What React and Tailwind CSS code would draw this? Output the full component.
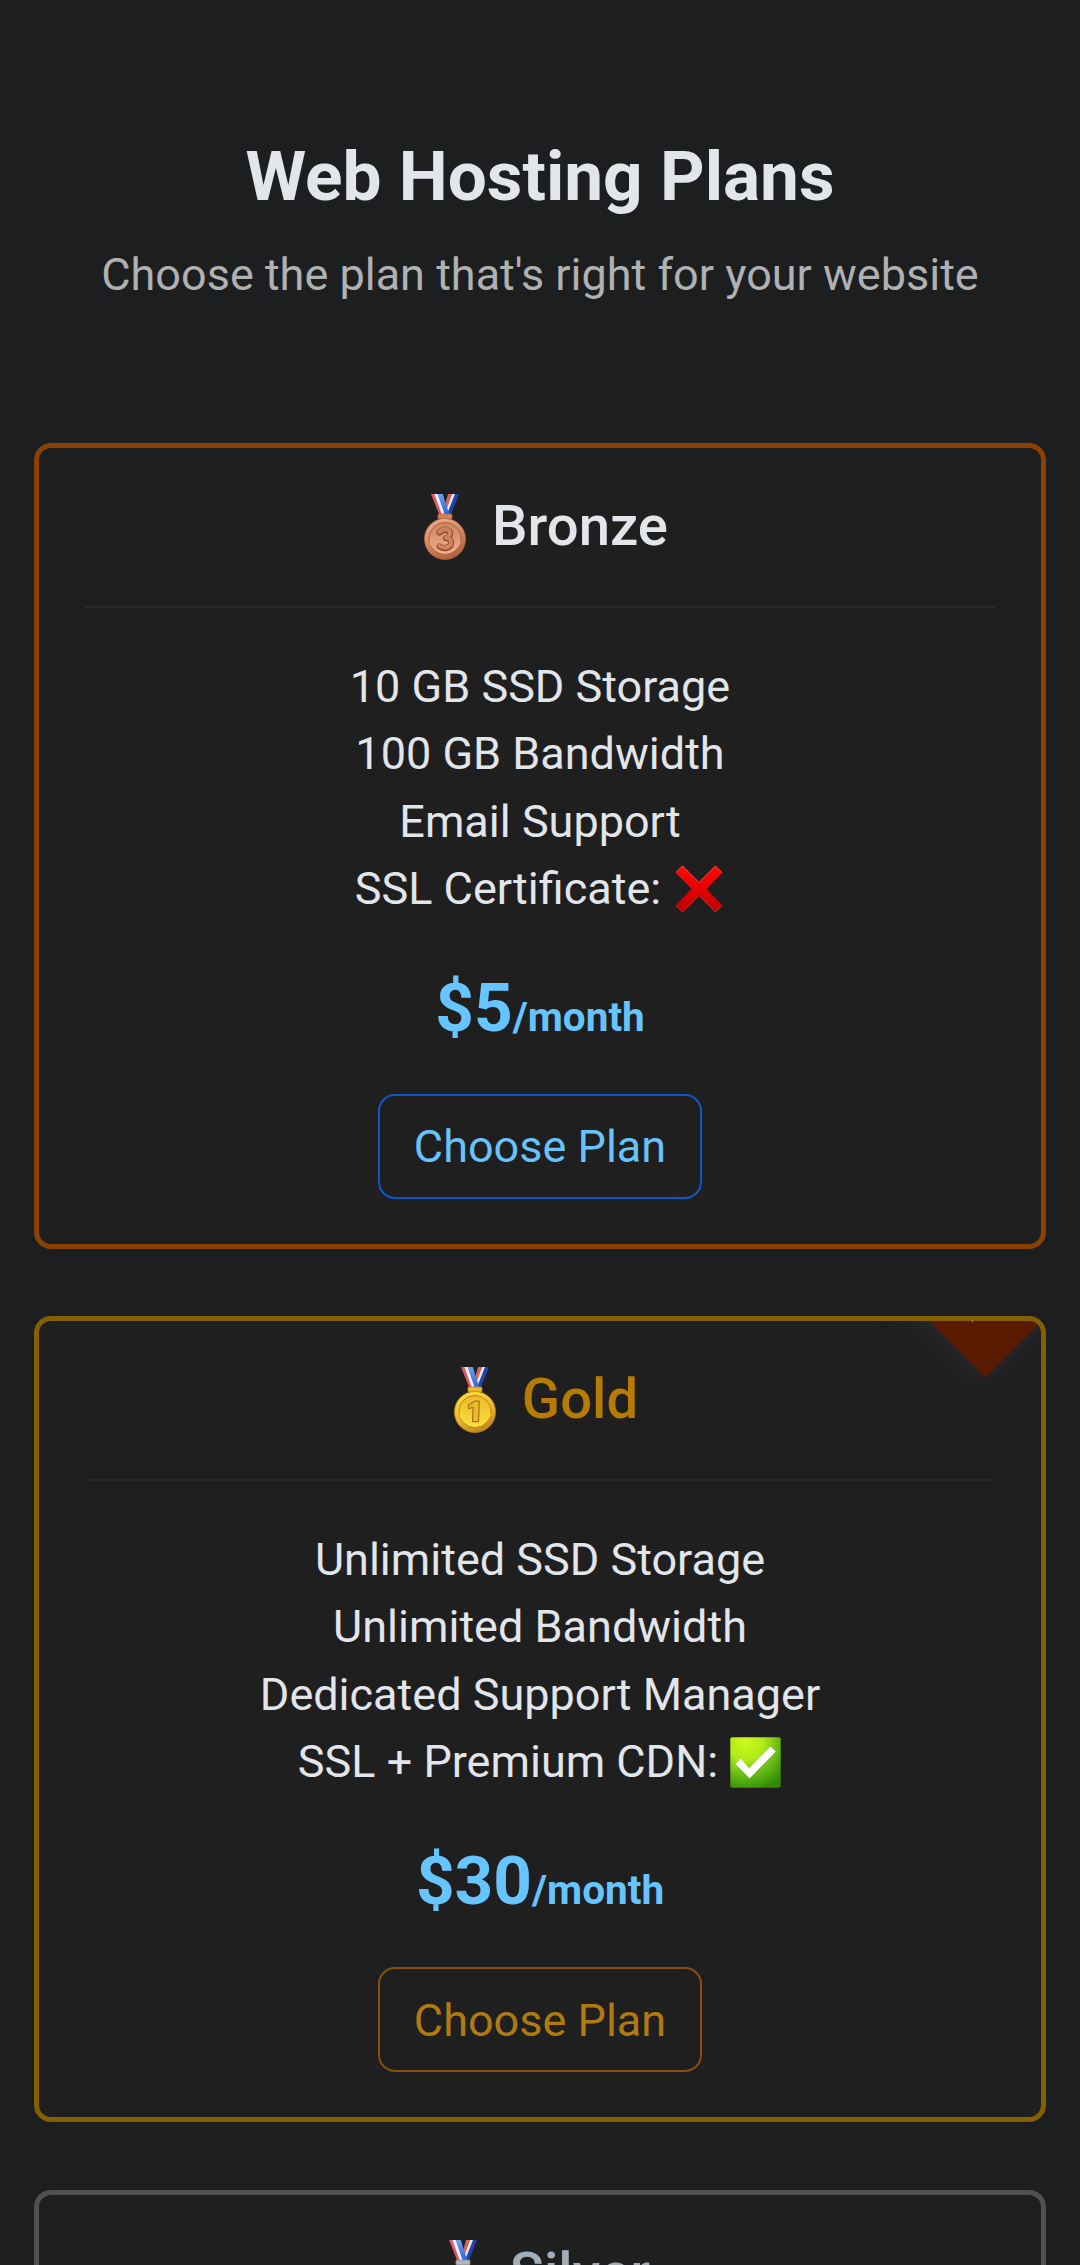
function Medal({ number, light, mid, dark, rim, id }) {
  return (
    <svg className="h-[66px] w-[42px] shrink-0" viewBox="0 0 42 66" aria-hidden="true">
      <defs>
        <linearGradient id={id} x1="0.2" y1="0" x2="0.6" y2="1">
          <stop offset="0" stopColor={light} />
          <stop offset="0.55" stopColor={mid} />
          <stop offset="1" stopColor={rim} />
        </linearGradient>
        <linearGradient id={id + "d"} x1="0" y1="0" x2="0" y2="1">
          <stop offset="0" stopColor={mid} />
          <stop offset="1" stopColor={light} />
        </linearGradient>
        <linearGradient id={id + "b"} x1="0" y1="0" x2="0" y2="1">
          <stop offset="0" stopColor="#6ca0ee" />
          <stop offset="1" stopColor="#2a62d8" />
        </linearGradient>
      </defs>
      <path d="M24 0h5.200l-7 21h-4z" fill="#d0655b" />
      <path d="M28.200 0h3.200l-7.400 21h-3.500z" fill="#e9eaf4" />
      <path d="M31 0H35l-8.500 21.500h-4z" fill="#2343ac" />
      <path d="M7 0h4.400l8.400 21.500h-4.200z" fill="#e4566a" />
      <path d="M10.400 0h3.600l7.600 21.500h-3.400z" fill="#f6f4f8" />
      <path d="M13.600 0h5.200l6.800 21.500h-4.600z" fill={"url(#" + id + "b)"} />
      <rect x="14" y="20" width="14" height="5" rx="1" fill={mid} stroke={rim} strokeWidth="0.8" />
      <circle cx="21" cy="45" r="20.6" fill={"url(#" + id + ")"} stroke={rim} strokeWidth="0.6" />
      <circle cx="21" cy="44.500" r="16" fill={"url(#" + id + "d)"} stroke={rim} strokeWidth="1" />
      <path d="M5.500 47a16 16 0 0 0 31 0" fill="none" stroke={light} strokeWidth="0.9" />
      {number === 3 && (
        <g fill="none" strokeLinejoin="round" strokeLinecap="round">
          <path d="M15.500 38.500q5.500-5 9.800-1.200q2.600 4.500-3.300 6.800q7 1.500 4.500 7.300q-4.500 4.900-11 1" stroke={dark} strokeWidth="6" />
          <path d="M15.500 38q5.500-5 9.800-1.200q2.600 4.500-3.300 6.800q7 1.500 4.500 7.300q-4.500 4.900-11 1" stroke={mid} strokeWidth="4" />
        </g>
      )}
      {number === 1 && (
        <path d="M14.500 38l6-3.800h4.800l-.8 20.500h-6l.6-14.500-4.600 1.500z" fill={mid} stroke={dark} strokeWidth="1.200" strokeLinejoin="round" />
      )}
    </svg>
  );
}

function Cross() {
  return (
    <svg className="h-[48px] w-[48px]" viewBox="0 0 48 48" aria-hidden="true">
      <defs>
        <linearGradient id="cross" x1="0" y1="0" x2="0" y2="1">
          <stop offset="0" stopColor="#ff0a0a" />
          <stop offset="0.5" stopColor="#e60000" />
          <stop offset="1" stopColor="#b80000" />
        </linearGradient>
      </defs>
      <path d="M.5 7.500L7.500.5L24 17L40.500.5L47.500 7.500L31.500 24L47.500 40.500L40.500 47.500L24 31L7.500 47.500L.5 40.500L16.500 24z" fill="url(#cross)" />
      <path d="M1 7.500L7.500 1L24 17.500L40.500 1L47 7.500" fill="none" stroke="#ff7a70" strokeOpacity="0.600" strokeWidth="0.900" />
      <path d="M1 40.500L7.500 47L24 30.500L40.500 47L47 40.500" fill="none" stroke="#e2635c" strokeOpacity="0.450" strokeWidth="0.900" />
    </svg>
  );
}

function Check() {
  return (
    <svg className="h-[51px] w-[51px]" viewBox="0 0 51 51" aria-hidden="true">
      <defs>
        <radialGradient id="check" cx="0.3" cy="0.1" r="1">
          <stop offset="0" stopColor="#cff81c" />
          <stop offset="0.350" stopColor="#b0ea1a" />
          <stop offset="0.750" stopColor="#56ae12" />
          <stop offset="1" stopColor="#2f8a06" />
        </radialGradient>
      </defs>
      <rect x="0.300" y="0.300" width="50.400" height="50.400" rx="2" fill="url(#check)" />
      <path d="M6 28l5-5.500 8 8L40.500 10.500l5.500 5L20 42.500z" fill="#317c08" fillOpacity="0.400" />
      <path d="M5.500 27l5.300-5.300 8.400 9.300L40.500 9.500l5.300 5.300L19.700 41.500z" fill="#fff" />
    </svg>
  );
}

const medals = {
  bronze: { id: "bronze", number: 3, light: "#efae8c", mid: "#cf8460", rim: "#b0603c", dark: "#8c4a2c" },
  gold: { id: "gold", number: 1, light: "#fbe03a", mid: "#edb92c", rim: "#bd8420", dark: "#a8701c" },
  silver: { id: "silver", number: 2, light: "#e8e8ea", mid: "#b4b4b8", rim: "#8c8c90", dark: "#77777c" },
};

const plans = [
  {
    name: "Bronze",
    medal: medals.bronze,
    border: "border-[#8a4000]",
    title: "text-[#e2e5ea]",
    features: ["10 GB SSD Storage", "100 GB Bandwidth", "Email Support"],
    ssl: "SSL Certificate:",
    mark: "cross",
    price: "$5",
    button: "border-[#0f56c8] text-[#69c3fb]",
  },
  {
    name: "Gold",
    medal: medals.gold,
    border: "border-[#856000]",
    title: "text-[#b57b02]",
    features: ["Unlimited SSD Storage", "Unlimited Bandwidth", "Dedicated Support Manager"],
    ssl: "SSL + Premium CDN:",
    mark: "check",
    price: "$30",
    button: "border-[#85500f] text-[#b07a10]",
    ribbon: true,
  },
  {
    name: "Silver",
    medal: medals.silver,
    border: "border-[#505050]",
    title: "text-[#a5adb7]",
    features: [],
  },
];

function PlanCard({ plan }) {
  return (
    <article className={"relative h-[806px] shrink-0 overflow-hidden rounded-[17px] border-[5px] bg-[#1f1f1f] p-[45px] text-center " + plan.border}>
      {plan.ribbon && (
        <>
          <div className="absolute -top-[80.5px] right-[-1px] h-[113px] w-[113px] rotate-45 bg-[#581a00] shadow-[0_10px_24px_rgba(44,50,53,0.55)]" />
          <span className="absolute top-0 right-[68px] h-px w-px bg-[#c9b49a]" />
        </>
      )}
      <h2 className={"flex h-[67.5px] items-start justify-center text-[56.25px] leading-[66px] font-medium " + plan.title}>
        <span className="flex w-[66px] shrink-0 justify-center pt-[0.7px]">
          <Medal {...plan.medal} />
        </span>
        <span className="ml-[14px]">{plan.name}</span>
      </h2>
      {plan.price && (
        <>
          <hr className="my-[45px] h-[2px] border-0 bg-[#282828]" />
          <ul className="mb-[44px] text-[45px] leading-[67.5px] text-[#e2e5ea]">
            {plan.features.map((f) => (
              <li key={f}>{f}</li>
            ))}
            <li className="flex h-[67.5px] items-center justify-center">
              <span>{plan.ssl}</span>
              <span className="ml-[11px] flex w-[53px] justify-center">{plan.mark === "cross" ? <Cross /> : <Check />}</span>
            </li>
          </ul>
          <p className="mb-[46px] text-[67.5px] leading-[81px] font-bold text-[#66c4ff]">
            {plan.price}
            <span className="text-[40.5px] leading-none">/month</span>
          </p>
          <button className={"h-[105px] w-[324px] rounded-[17px] border-2 pt-[2px] text-[45px] leading-[67.5px] " + plan.button}>Choose Plan</button>
        </>
      )}
    </article>
  );
}

export default function App() {
  return (
    <main className="flex h-[2265px] w-full flex-col overflow-hidden bg-[#1d1e20] px-[34px] pt-[135px] font-[Roboto,sans-serif]">
      <header className="h-[308px] shrink-0 text-center">
        <h1 className="mb-[22.5px] text-[69.35px] leading-[83.2px] font-bold text-[#e2e5ea]">Web Hosting Plans</h1>
        <p className="text-[45px] leading-[67.5px] whitespace-nowrap text-[#afb1b3]">Choose the plan that's right for your website</p>
      </header>
      <div className="flex flex-col gap-[67.4px]">
        {plans.map((p) => (
          <PlanCard key={p.name} plan={p} />
        ))}
      </div>
    </main>
  );
}
